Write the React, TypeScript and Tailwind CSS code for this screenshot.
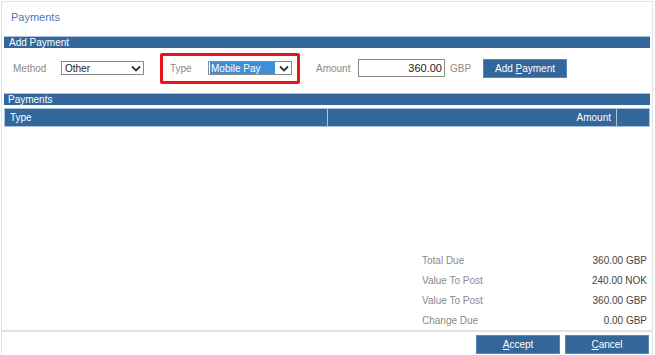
import React from "react";

function Chevron() {
  return (
    <svg width="10" height="7" viewBox="0 0 10 7" className="text-[#333]">
      <path d="M1 1.5 L5 5.5 L9 1.5" fill="none" stroke="currentColor" strokeWidth="1.8" />
    </svg>
  );
}

function Select({ value, highlighted, width }: { value: string; highlighted?: boolean; width: string }) {
  return (
    <div className={`${width} h-[14px] border border-[#8a8a8a] bg-white flex items-stretch`}>
      <div className="flex-1 flex items-center px-[1px]">
        <span
          className={
            highlighted
              ? "flex-1 h-full flex items-center pl-[1px] bg-[#3d8fd6] text-white"
              : "pl-[2px] text-[#222]"
          }
        >
          {value}
        </span>
      </div>
      <div className="w-[15px] flex items-center justify-center">
        <Chevron />
      </div>
    </div>
  );
}

function BlueButton({ children, w }: { children: React.ReactNode; w: string }) {
  return (
    <button className={`${w} h-[19px] bg-[#336699] border border-[#5b86b8] text-white text-[10px] flex items-center justify-center`}>
      {children}
    </button>
  );
}

const summary = [
  ["Total Due", "360.00 GBP"],
  ["Value To Post", "240.00 NOK"],
  ["Value To Post", "360.00 GBP"],
  ["Change Due", "0.00 GBP"],
];

export default function App() {
  return (
    <div
      className="w-[655px] h-[355px] bg-white overflow-hidden"
      style={{ fontFamily: "'Liberation Sans', Arial, sans-serif" }}
    >
      <div className="ml-[1px] mt-[1px] w-[652px] h-[354px] border-l border-t border-r border-[#e2e2e2] flex flex-col text-[10px]">
        {/* title */}
        <div className="h-[34px] pl-[9px] pt-[7px] text-[11px] text-[#4b78b3]">Payments</div>

        <div className="px-[2px]">
          <div className="h-[12px] bg-[#336699] border-t border-[#a9c1dc] text-white text-[10px] leading-[11px] pl-[5px]">
            Add Payment
          </div>
        </div>

        {/* add payment row */}
        <div className="h-[40px] flex items-center pl-[11px] mb-[5px]">
          <span className="w-[48px] text-[#8a8a8a]">Method</span>
          <Select value="Other" width="w-[83px]" />
          <div className="ml-[16px] h-[31px] w-[140px] border-[3px] border-[#e8141c] rounded-[2px] flex items-center pl-[7px]">
            <span className="w-[38px] text-[#8a8a8a]">Type</span>
            <Select value="Mobile Pay" highlighted width="w-[84px]" />
          </div>
          <span className="ml-[16px] w-[42px] text-[#8a8a8a]">Amount</span>
          <div className="w-[87px] h-[18px] border border-[#8a8a8a] flex items-center justify-end pr-[2px] text-[#222] text-[11px]">
            360.00
          </div>
          <span className="ml-[5px] w-[33px] text-[#8a8a8a]">GBP</span>
          <BlueButton w="w-[84px]">
            <span>
              Add <span className="underline">P</span>ayment
            </span>
          </BlueButton>
        </div>

        <div className="px-[2px]">
          <div className="h-[12px] bg-[#336699] border-t border-[#a9c1dc] text-white text-[10px] leading-[11px] pl-[4px]">
            Payments
          </div>
          <div className="mt-[3px] h-[19px] bg-[#336699] border border-[#a9c1dc] flex text-white text-[10px]">
            <div className="w-[323px] border-r border-[#a9c1dc] flex items-center pl-[5px]">Type</div>
            <div className="flex-1 border-r border-[#a9c1dc] flex items-center justify-end pr-[5px]">Amount</div>
            <div className="w-[32px]" />
          </div>
        </div>

        {/* table body */}
        <div className="flex-1" />

        {/* summary */}
        <div className="flex flex-col pl-[420px] pr-[5px]">
          {summary.map(([label, value], i) => (
            <div key={i} className="h-[20px] flex items-center justify-between">
              <span className="text-[#8a8a8a]">{label}</span>
              <span className="text-[#444]">{value}</span>
            </div>
          ))}
        </div>

        <div className="h-[25px] border-t-2 border-[#e2e2e2] flex items-start justify-end gap-[5px] pr-[3px] pt-[3px]">
          <BlueButton w="w-[84px]">
            <span>
              <span className="underline">A</span>ccept
            </span>
          </BlueButton>
          <BlueButton w="w-[84px]">
            <span>
              <span className="underline">C</span>ancel
            </span>
          </BlueButton>
        </div>
      </div>
    </div>
  );
}
